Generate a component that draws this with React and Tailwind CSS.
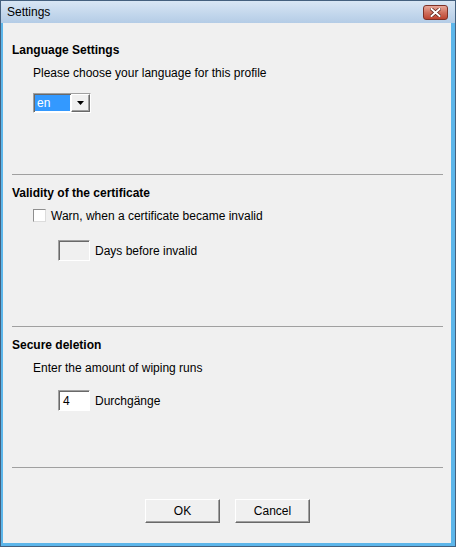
export default function App() {
  const sunken =
    "border border-t-[#a0a0a0] border-l-[#a0a0a0] border-r-white border-b-white shadow-[inset_1px_1px_0_#696969]";
  const raised =
    "border border-t-white border-l-white border-r-[#696969] border-b-[#696969] shadow-[inset_-1px_-1px_0_#a0a0a0]";

  return (
    <div className="w-[456px] h-[547px] flex flex-col border border-[#44607e] bg-[#5db6ea] font-['Liberation_Sans',Arial,sans-serif] text-[12px] leading-[14px] text-black">
      {/* title bar */}
      <div className="h-[22px] flex items-center justify-between pl-[6px] pr-[7px] bg-gradient-to-b from-[#d8e6f4] to-[#b4cce6]">
        <span className="text-[12px] text-black">Settings</span>
        <div className="w-[25px] h-[15px] rounded-[3px] border border-[#7d3127] bg-gradient-to-b from-[#e7a89a] via-[#d0705e] to-[#bd4330] flex items-center justify-center">
          <svg width="11" height="9" viewBox="0 0 11 9">
            <path d="M1.5 1l8 7M9.5 1l-8 7" stroke="#5a1f18" strokeWidth="3.4" strokeLinecap="square" />
            <path d="M1.5 1l8 7M9.5 1l-8 7" stroke="#ffffff" strokeWidth="2" strokeLinecap="square" />
          </svg>
        </div>
      </div>

      {/* client area */}
      <div className="flex-1 ml-[2px] mr-[4px] mb-[3px] bg-[#f0f0f0] pl-[9px] pr-[8px] pt-[20px] flex flex-col">
        <div className="font-bold">Language Settings</div>
        <div className="ml-[21px] mt-[9px]">Please choose your language for this profile</div>
        <div className={`ml-[21px] mt-[13px] w-[58px] h-[20px] flex bg-white ${sunken}`}>
          <div className="flex-1 m-[1px] bg-[#3399ff] text-white pl-[2px] flex items-center">en</div>
          <div className={`w-[19px] bg-[#f0f0f0] flex items-center justify-center ${raised}`}>
            <svg width="7" height="4" viewBox="0 0 7 4">
              <path d="M0 0h7L3.5 4z" fill="#000" />
            </svg>
          </div>
        </div>

        <div className="mt-[61px] h-px bg-[#a0a0a0]" />

        <div className="mt-[11px] font-bold">Validity of the certificate</div>
        <div className="mt-[9px] ml-[21px] flex items-center h-[13px]">
          <div className="w-[13px] h-[13px] bg-white border border-t-[#8e8e8e] border-l-[#8e8e8e] border-r-[#dcdcdc] border-b-[#dcdcdc]" />
          <span className="ml-[5px]">Warn, when a certificate became invalid</span>
        </div>
        <div className="mt-[18px] ml-[46px] flex items-center">
          <div className={`w-[32px] h-[21px] bg-[#f0f0f0] ${sunken}`} />
          <span className="ml-[5px]">Days before invalid</span>
        </div>

        <div className="mt-[65px] h-px bg-[#a0a0a0]" />

        <div className="mt-[11px] font-bold">Secure deletion</div>
        <div className="ml-[21px] mt-[9px]">Enter the amount of wiping runs</div>
        <div className="mt-[15px] ml-[46px] flex items-center">
          <div className={`w-[32px] h-[21px] bg-white flex items-center pl-[4px] ${sunken}`}>4</div>
          <span className="ml-[5px]">Durchgänge</span>
        </div>

        <div className="mt-[56px] h-px bg-[#a0a0a0]" />

        <div className="mt-[31px] flex justify-center gap-[15px]">
          <button className={`w-[75px] h-[24px] bg-[#f0f0f0] flex items-center justify-center ${raised}`}>OK</button>
          <button className={`w-[75px] h-[24px] bg-[#f0f0f0] flex items-center justify-center ${raised}`}>Cancel</button>
        </div>
      </div>
    </div>
  );
}
